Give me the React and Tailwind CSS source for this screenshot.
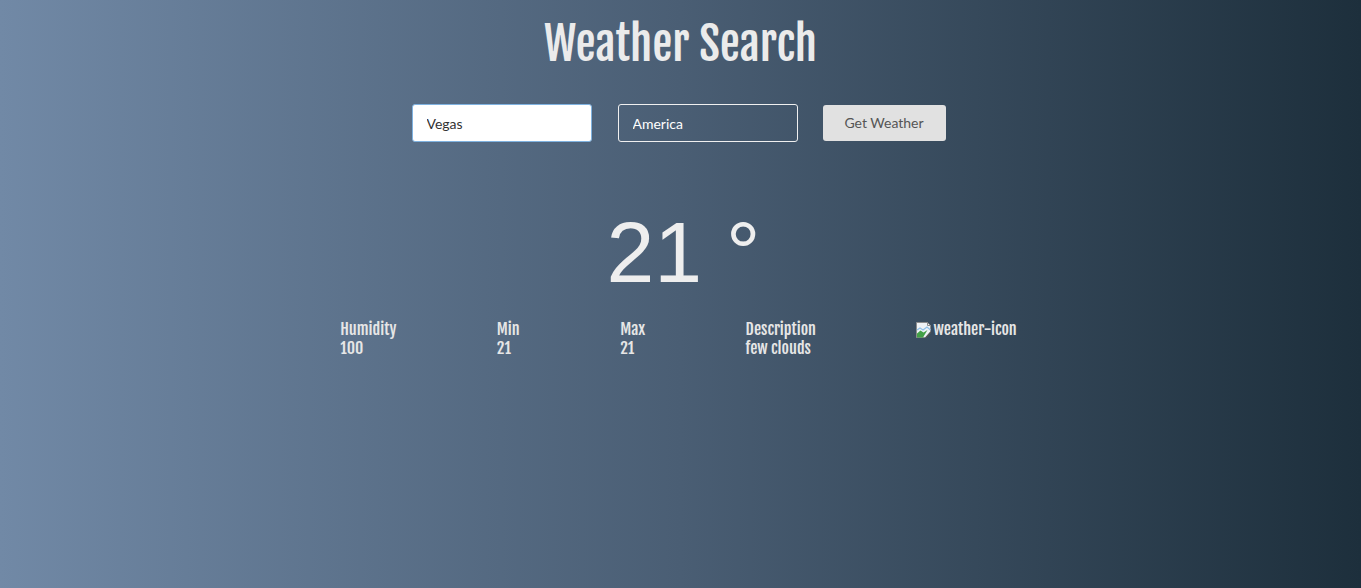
import { useState } from 'react';

const condensed = { fontFamily: '"Fjalla One", "Liberation Sans Narrow", "DejaVu Sans Condensed", "Roboto Condensed", sans-serif' };

const BrokenImage = () => (
  <svg width="16" height="16" viewBox="0 0 16 16" className="mr-px inline-block align-[-3px]">
    <path d="M0.5 0.5h11l3 3v6.5l-5 5.5h-9z" fill="#eef2f6" stroke="#8c8c8c" />
    <path d="M11.5 0.5v3h3" fill="none" stroke="#8c8c8c" />
    <path d="M1 8l3-2 3 2 4-3 3.5 3" fill="none" stroke="#8fc0e8" strokeWidth="1.2" />
    <path d="M1 15.5v-4l3.5-3 3 2 4-2.5-4.5 7.5z" fill="#43a047" />
    <path d="M9.5 16l5.5-6" fill="none" stroke="#555" strokeWidth="1.2" />
  </svg>
);

const Detail = ({ label, value }) => (
  <div className="leading-[19px]">
    <div>{label}</div>
    <div>{value}</div>
  </div>
);

const App = () => {
  const [city, setCity] = useState('Vegas');
  const [country, setCountry] = useState('America');

  return (
    <div className="min-h-[588px] w-full bg-gradient-to-r from-[#7189a6] via-[#4a5e74] to-[#1d2f3c] text-[#ececec]">
      <h1
        className="pt-[14px] text-center text-[45px] font-normal leading-[60px] text-[#ebebeb]"
        style={condensed}
      >
        Weather Search
      </h1>

      <form
        className="mt-[30px] flex justify-center pr-[4px]"
        style={{ fontFamily: 'Lato, "Open Sans", sans-serif' }}
        onSubmit={(e) => e.preventDefault()}
      >
        <input
          type="text"
          value={city}
          onChange={(e) => setCity(e.target.value)}
          className="h-[38px] w-[180px] rounded-[3px] border border-[#7fb2e0] bg-white px-[14px] text-sm text-[#333] outline-none"
        />
        <input
          type="text"
          value={country}
          onChange={(e) => setCountry(e.target.value)}
          className="ml-[26px] h-[38px] w-[180px] rounded-[3px] border border-[#f0f0f0] bg-transparent px-[14px] text-sm text-white outline-none"
        />
        <button
          type="submit"
          className="ml-[25px] mt-px h-[36px] w-[123px] rounded-[3px] bg-[#e1e1e1] text-sm text-[#555]"
        >
          Get Weather
        </button>
      </form>

      <div
        className="mt-[62px] pl-[6px] text-center text-[86px] font-light leading-[96px] text-[#eeeeee]"
        style={{ fontFamily: '"Liberation Sans", Arial, sans-serif' }}
      >
        21 °
      </div>

      <div
        className="mx-auto mt-[20px] flex w-[781px] justify-around pr-[4px] text-[16px] text-[#e6e6e6]"
        style={condensed}
      >
        <Detail label="Humidity" value="100" />
        <Detail label="Min" value="21" />
        <Detail label="Max" value="21" />
        <Detail label="Description" value="few clouds" />
        <div className="leading-[19px]">
          <BrokenImage />
          <span>weather-icon</span>
        </div>
      </div>
    </div>
  );
};

export default App;
